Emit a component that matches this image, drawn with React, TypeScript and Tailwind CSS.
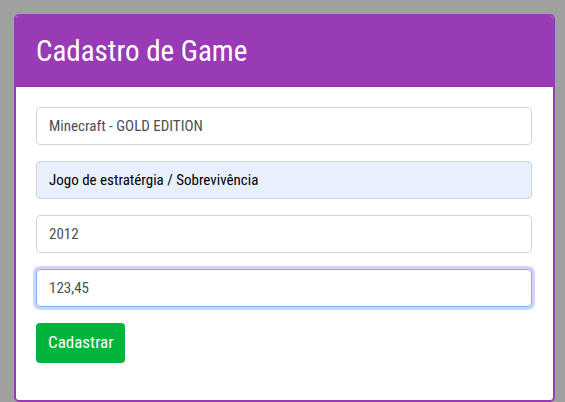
import React, { useState } from 'react';

const inputBase =
  'h-[38px] w-[496px] rounded-[4px] border px-[12px] text-[15px] outline-none';

const App: React.FC = () => {
  const [form, setForm] = useState({
    nome: 'Minecraft - GOLD EDITION',
    genero: 'Jogo de estratérgia / Sobrevivência',
    ano: '2012',
    preco: '123,45',
  });

  const update = (key: keyof typeof form) => (e: React.ChangeEvent<HTMLInputElement>) =>
    setForm(prev => ({ ...prev, [key]: e.target.value }));

  return (
    <div className="min-h-[402px] bg-[#a0a0a0] pt-[14px] pl-[14px] font-['Roboto_Condensed','Liberation_Sans',sans-serif]">
      <div className="w-[541px] h-[388px] rounded-[5px] border-2 border-[#9a3bb6] bg-white overflow-hidden">
        <div className="h-[71px] bg-[#9a3bb6] border-b border-[#8a32a4] flex items-center px-[20px]">
          <h1 className="text-[29px] text-white leading-none">Cadastro de Game</h1>
        </div>

        <div className="px-[20px] pt-[20px] flex flex-col gap-[16px]">
          <input
            value={form.nome}
            onChange={update('nome')}
            className={`${inputBase} border-[#ced4da] bg-white text-[#495057]`}
          />
          <input
            value={form.genero}
            onChange={update('genero')}
            className={`${inputBase} border-[#ced4da] bg-[#e8f0fe] text-black`}
          />
          <input
            value={form.ano}
            onChange={update('ano')}
            className={`${inputBase} border-[#ced4da] bg-white text-[#495057]`}
          />
          <input
            value={form.preco}
            onChange={update('preco')}
            className={`${inputBase} border-[#80b1f5] ring-[3px] ring-[#d1d5fc] bg-white text-[#495057]`}
          />
          <div>
            <button className="h-[40px] px-[12px] rounded-[4px] bg-[#00b43c] text-white text-[17px]">
              Cadastrar
            </button>
          </div>
        </div>
      </div>
    </div>
  );
};

export default App;
